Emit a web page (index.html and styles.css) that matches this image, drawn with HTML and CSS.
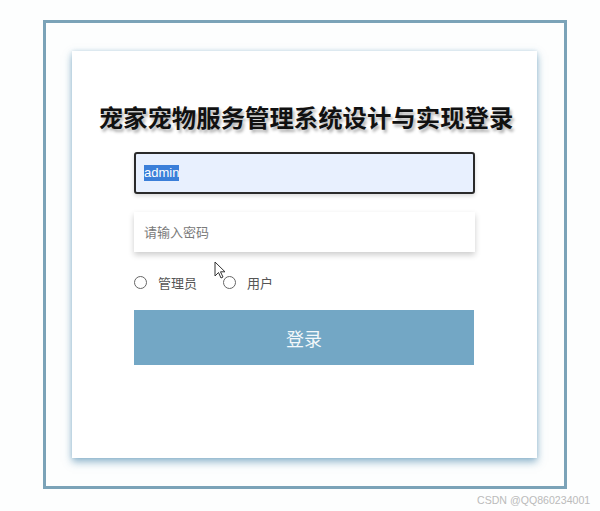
FILE: index.html
```html
<!DOCTYPE html>
<html lang="zh">
<head>
<meta charset="utf-8">
<title>登录</title>
<link rel="stylesheet" href="styles.css">
</head>
<body>
<div class="frame">
  <div class="card">
    <h1 class="title">宠家宠物服务管理系统设计与实现登录</h1>
    <div class="field field-user"><span class="sel">admin</span></div>
    <input class="field field-pass" type="password" placeholder="请输入密码">
    <div class="roles">
      <label class="role"><span class="radio"></span><span>管理员</span></label>
      <label class="role"><span class="radio"></span><span>用户</span></label>
    </div>
    <button class="btn">登录</button>
  </div>
</div>
<svg class="cursor" width="13" height="19" viewBox="0 0 13 19"><path d="M1 1 L1 15 L4.5 11.5 L7 17 L9 16 L6.5 10.8 L11 10.8 Z" fill="#fff" stroke="#333" stroke-width="1"/></svg>
<div class="watermark">CSDN @QQ860234001</div>
</body>
</html>
```
FILE: styles.css
```css
html, body {
  margin: 0;
  padding: 0;
  background: #fdfefe;
}
body {
  width: 600px;
  height: 511px;
  position: relative;
  overflow: hidden;
  font-family: "Liberation Sans", "Noto Sans CJK SC", sans-serif;
}
.frame {
  box-sizing: border-box;
  margin: 20px 0 0 43px;
  width: 524px;
  height: 469px;
  border: 3px solid #7ba3b8;
  padding: 28px 0 0 26px;
}
.card {
  box-sizing: border-box;
  width: 465px;
  height: 407px;
  background: #fff;
  box-shadow: 0 4px 8px rgba(60, 125, 165, 0.55), 0 0 4px rgba(120, 170, 200, 0.3);
  display: flex;
  flex-direction: column;
  align-items: center;
  padding-top: 51px;
}
.title {
  margin: 0;
  font-family: "Noto Sans CJK SC", sans-serif;
  font-size: 24.4px;
  line-height: 30px;
  font-weight: 700;
  color: #111;
  text-shadow: 2px 3px 3px rgba(0, 0, 0, 0.3);
  margin-left: 3px;
}
.field {
  box-sizing: border-box;
  width: 341px;
  display: flex;
  align-items: center;
  font-family: "Liberation Sans", "Noto Sans CJK SC", sans-serif;
}
.field-user {
  margin-top: 20px;
  height: 42px;
  background: #e8f0fe;
  border: 2px solid #2a2a2a;
  border-radius: 3px;
  padding-left: 8px;
  font-size: 13px;
  box-shadow: 0 2px 4px rgba(0, 0, 0, 0.15);
}
.sel {
  background: #3b7fd9;
  color: #fff;
  line-height: 16px;
}
.field-pass {
  margin-top: 18px;
  height: 40px;
  border: none;
  outline: none;
  background: #fff;
  padding: 0 0 0 10px;
  font-size: 13px;
  box-shadow: 0 3px 6px rgba(0, 0, 0, 0.2);
}
.field-pass::placeholder {
  color: #7a7a7a;
  font-family: "Noto Sans CJK SC", sans-serif;
}
.roles {
  width: 341px;
  display: flex;
  gap: 26px;
  margin-top: 21px;
  height: 18px;
  align-items: center;
}
.role {
  display: flex;
  align-items: center;
  gap: 11px;
  font-size: 13px;
  color: #555;
  font-family: "Noto Sans CJK SC", sans-serif;
}
.radio {
  box-sizing: border-box;
  width: 13px;
  height: 13px;
  border: 1px solid #666;
  border-radius: 50%;
  background: #fff;
}
.btn {
  margin-top: 19px;
  width: 340px;
  height: 55px;
  border: none;
  background: #73a7c5;
  color: #f2f7fa;
  font-size: 18px;
  font-family: "Noto Sans CJK SC", sans-serif;
  margin-right: 1px;
}
.cursor {
  position: absolute;
  left: 214px;
  top: 261px;
}
.watermark {
  position: absolute;
  left: 477px;
  top: 494px;
  font-size: 10.6px;
  color: #bbbbbb;
  font-family: "Liberation Sans", sans-serif;
}
```
